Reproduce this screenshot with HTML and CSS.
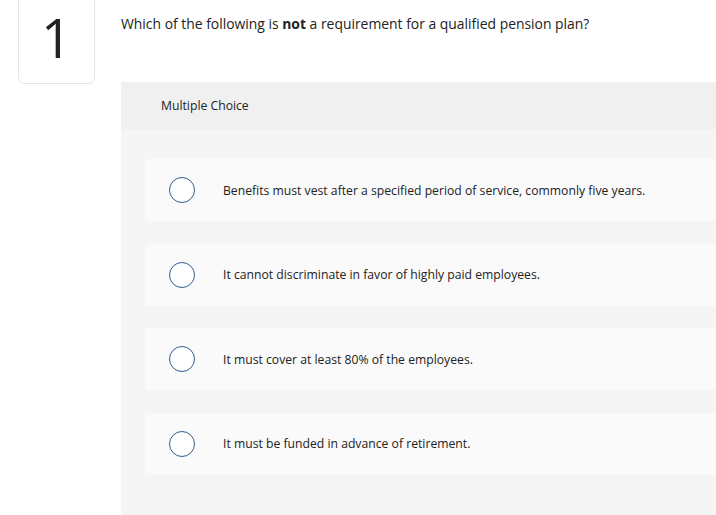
FILE: index.html
```html
<!DOCTYPE html>
<html lang="en">

<head>
  <meta charset="UTF-8" />
  <meta name="viewport" content="width=device-width, initial-scale=1.0" />
  <title>Question 1</title>
  <link rel="stylesheet" href="styles.css">
</head>

<body>
  <div class="question flex">
    <div class="question-number">1</div>

    <div class="question-body">
      <p class="prompt">Which of the following is <strong>not</strong> a requirement for a qualified pension plan?</p>

      <div class="answer-panel">
        <div class="answer-type">Multiple Choice</div>

        <div class="choices">
          <label class="choice">
            <span class="radio"></span>
            <span class="choice-text">Benefits must vest after a specified period of service, commonly five years.</span>
          </label>
          <label class="choice">
            <span class="radio"></span>
            <span class="choice-text">It cannot discriminate in favor of highly paid employees.</span>
          </label>
          <label class="choice">
            <span class="radio"></span>
            <span class="choice-text">It must cover at least 80% of the employees.</span>
          </label>
          <label class="choice">
            <span class="radio"></span>
            <span class="choice-text">It must be funded in advance of retirement.</span>
          </label>
        </div>
      </div>
    </div>
  </div>
</body>

</html>
```

FILE: styles.css
```css
body {
  margin: 0;
  font-family: "Open Sans", "Liberation Sans", sans-serif;
  color: #222;
  background-color: #fff;
  overflow: hidden;
}

.flex {
  display: flex;
}

.question {
  align-items: flex-start;
}

.question-number {
  box-sizing: border-box;
  width: 77px;
  height: 94px;
  margin: -10px 0 0 18px;
  padding-top: 16px;
  border: 1px solid #e6e6e6;
  border-radius: 6px;
  font-size: 54px;
  line-height: 60px;
  text-align: center;
  color: #222;
}

.question-body {
  flex: 1;
  margin-left: 26px;
}

.prompt {
  margin: 15px 0 0;
  font-size: 13.9px;
  line-height: 18px;
}

.prompt strong {
  font-weight: 700;
}

.answer-panel {
  margin-top: 49px;
  background-color: #f5f5f5;
  min-height: 440px;
}

.answer-type {
  height: 47px;
  padding-left: 40px;
  background-color: #f0f0f0;
  font-size: 12.2px;
  line-height: 47px;
}

.choices {
  display: flex;
  flex-direction: column;
  gap: 22.67px;
  padding: 30px 0 0 24px;
}

.choice {
  display: flex;
  align-items: center;
  height: 62px;
  margin-right: -10px;
  border-radius: 4px;
  background-color: #fafafa;
}

.radio {
  box-sizing: border-box;
  width: 26px;
  height: 26px;
  margin-left: 24px;
  border: 1.5px solid #2f5f8f;
  border-radius: 50%;
  background-color: #fff;
}

.choice-text {
  margin-left: 28px;
  font-size: 12.2px;
}
```
